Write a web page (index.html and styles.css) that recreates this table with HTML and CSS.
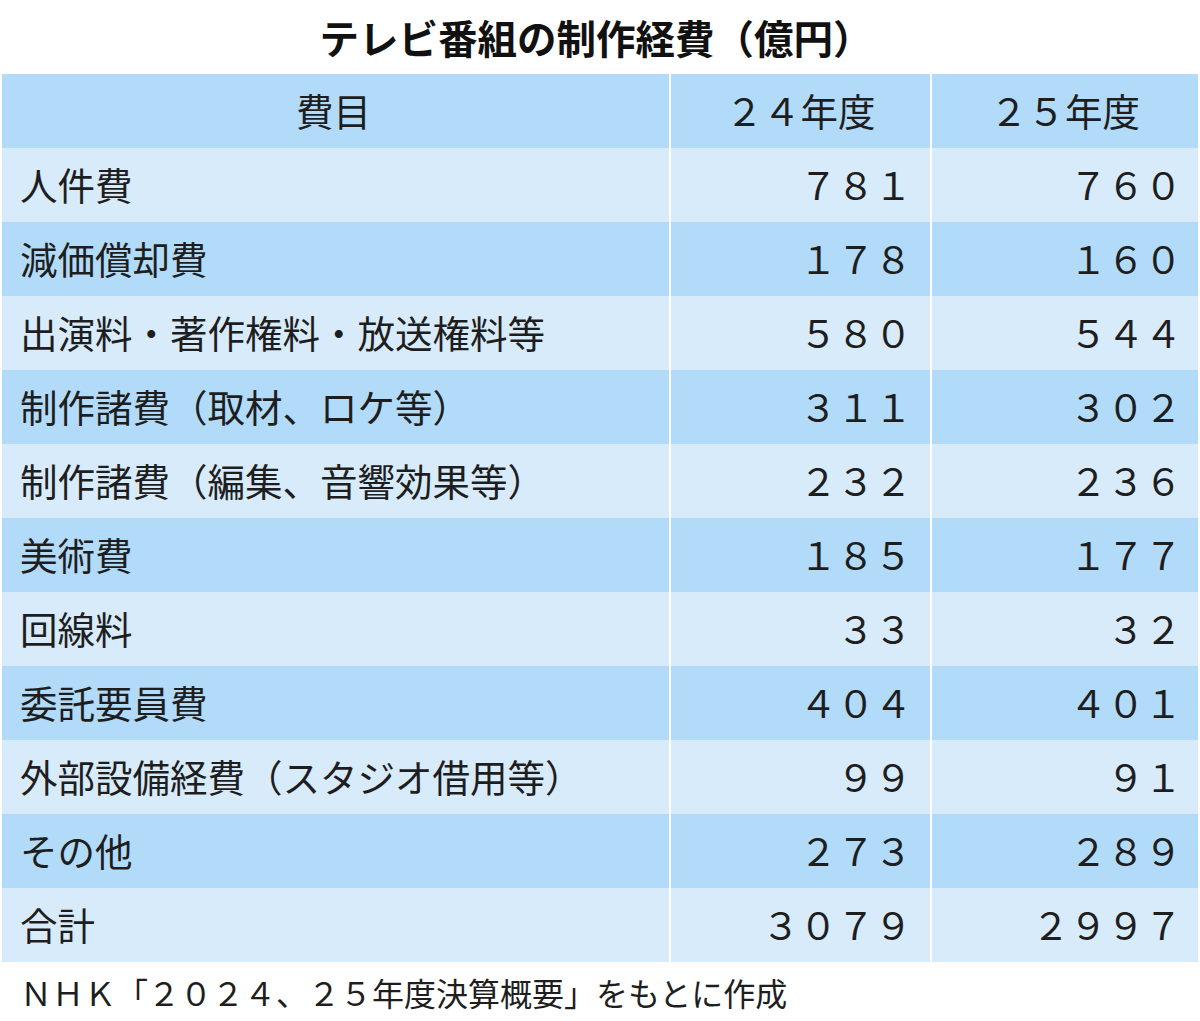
FILE: index.html
```html
<!DOCTYPE html>
<html lang="ja">
<head>
<meta charset="utf-8">
<link rel="stylesheet" href="styles.css">
</head>
<body>
<div class="wrap">
  <h1 class="title">テレビ番組の制作経費（億円）</h1>
  <table class="tbl">
    <colgroup><col class="c1"><col class="c2"><col class="c3"></colgroup>
    <thead>
      <tr><th>費目</th><th>２４年度</th><th>２５年度</th></tr>
    </thead>
    <tbody>
      <tr><td>人件費</td><td>７８１</td><td>７６０</td></tr>
      <tr><td>減価償却費</td><td>１７８</td><td>１６０</td></tr>
      <tr><td>出演料・著作権料・放送権料等</td><td>５８０</td><td>５４４</td></tr>
      <tr><td>制作諸費（取材、ロケ等）</td><td>３１１</td><td>３０２</td></tr>
      <tr><td>制作諸費（編集、音響効果等）</td><td>２３２</td><td>２３６</td></tr>
      <tr><td>美術費</td><td>１８５</td><td>１７７</td></tr>
      <tr><td>回線料</td><td>３３</td><td>３２</td></tr>
      <tr><td>委託要員費</td><td>４０４</td><td>４０１</td></tr>
      <tr><td>外部設備経費（スタジオ借用等）</td><td>９９</td><td>９１</td></tr>
      <tr><td>その他</td><td>２７３</td><td>２８９</td></tr>
      <tr><td>合計</td><td>３０７９</td><td>２９９７</td></tr>
    </tbody>
  </table>
  <p class="note">ＮＨＫ「２０２４、２５年度決算概要」をもとに作成</p>
</div>
</body>
</html>
```
FILE: styles.css
```css
html, body {
  margin: 0;
  padding: 0;
  background: #fff;
}
body {
  font-family: "Noto Sans CJK JP", "Noto Sans", sans-serif;
  color: #1e1e1e;
}
.wrap {
  width: 1200px;
  height: 1021px;
  overflow: hidden;
}
.title {
  margin: 0;
  height: 74px;
  display: flex;
  align-items: center;
  justify-content: center;
  font-size: 39.5px;
  font-weight: 700;
  color: #111;
  line-height: 1;
  padding-right: 8px;
  box-sizing: border-box;
}
.tbl {
  margin-left: 2px;
  width: 1196px;
  border-collapse: collapse;
  table-layout: fixed;
}
.c1 { width: 668px; }
.c2 { width: 261px; }
.c3 { width: 267px; }
.tbl th, .tbl td {
  height: 74px;
  padding: 0 0 3px 0;
  font-size: 37.5px;
  font-weight: 400;
  line-height: 1;
  border-left: 2px solid #fff;
  box-sizing: border-box;
}
.tbl th:first-child, .tbl td:first-child {
  border-left: none;
}
.tbl th {
  background: #b2dbf9;
  text-align: center;
}
.tbl th:first-child {
  padding-right: 4px;
}
.tbl td:first-child {
  padding-left: 18px;
  text-align: left;
}
.tbl td:nth-child(2) {
  text-align: right;
  padding-right: 18px;
}
.tbl td:nth-child(3) {
  text-align: right;
  padding-right: 16px;
}
.tbl tbody tr:nth-child(odd) td {
  background: #d8ebfb;
}
.tbl tbody tr:nth-child(even) td {
  background: #b2dbf9;
}
.note {
  margin: 0;
  padding-left: 20px;
  height: 59px;
  display: flex;
  align-items: center;
  font-size: 32px;
  line-height: 1;
  color: #1e1e1e;
}
```
